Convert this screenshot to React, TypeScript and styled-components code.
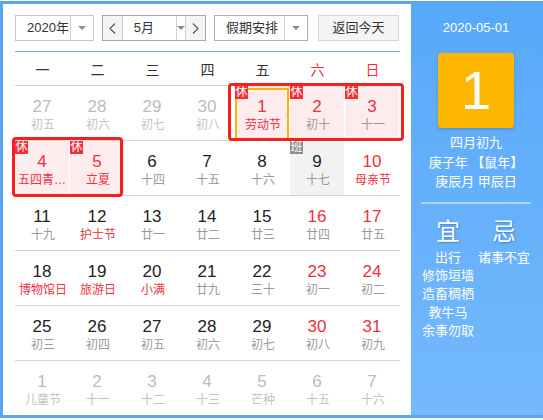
import styled, { createGlobalStyle } from "styled-components";

const GlobalStyle = createGlobalStyle`
  html, body {
    margin: 0;
    padding: 0;
    background: #fff;
    overflow: hidden;
  }
  body {
    font-family: "Liberation Sans", "Noto Sans CJK SC", sans-serif;
    color: #333;
  }
`;

type Day = {
  n: number;
  sub: string;
  other?: boolean;
  red?: boolean;
  fest?: boolean;
  mark?: "休" | "班";
  today?: boolean;
};

const weeks: Day[][] = [
  [
    { n: 27, sub: "初五", other: true },
    { n: 28, sub: "初六", other: true },
    { n: 29, sub: "初七", other: true },
    { n: 30, sub: "初八", other: true },
    { n: 1, sub: "劳动节", red: true, fest: true, mark: "休", today: true },
    { n: 2, sub: "初十", red: true, mark: "休" },
    { n: 3, sub: "十一", red: true, mark: "休" },
  ],
  [
    { n: 4, sub: "五四青年节", red: true, fest: true, mark: "休" },
    { n: 5, sub: "立夏", red: true, fest: true, mark: "休" },
    { n: 6, sub: "十四" },
    { n: 7, sub: "十五" },
    { n: 8, sub: "十六" },
    { n: 9, sub: "十七", mark: "班" },
    { n: 10, sub: "母亲节", red: true, fest: true },
  ],
  [
    { n: 11, sub: "十九" },
    { n: 12, sub: "护士节", fest: true },
    { n: 13, sub: "廿一" },
    { n: 14, sub: "廿二" },
    { n: 15, sub: "廿三" },
    { n: 16, sub: "廿四", red: true },
    { n: 17, sub: "廿五", red: true },
  ],
  [
    { n: 18, sub: "博物馆日", fest: true },
    { n: 19, sub: "旅游日", fest: true },
    { n: 20, sub: "小满", fest: true },
    { n: 21, sub: "廿九" },
    { n: 22, sub: "三十" },
    { n: 23, sub: "初一", red: true },
    { n: 24, sub: "初二", red: true },
  ],
  [
    { n: 25, sub: "初三" },
    { n: 26, sub: "初四" },
    { n: 27, sub: "初五" },
    { n: 28, sub: "初六" },
    { n: 29, sub: "初七" },
    { n: 30, sub: "初八", red: true },
    { n: 31, sub: "初九", red: true },
  ],
  [
    { n: 1, sub: "儿童节", other: true },
    { n: 2, sub: "十一", other: true },
    { n: 3, sub: "十二", other: true },
    { n: 4, sub: "十三", other: true },
    { n: 5, sub: "芒种", other: true },
    { n: 6, sub: "十五", other: true },
    { n: 7, sub: "十六", other: true },
  ],
];

const weekdays = ["一", "二", "三", "四", "五", "六", "日"];
const goodThings = ["出行", "修饰垣墙", "造畜稠栖", "教牛马", "余事勿取"];
const badThings = ["诸事不宜"];

const RED = "#f0303c";

const Widget = styled.div`
  display: flex;
  width: 560px;
  margin-top: 1px;
  border: 3px solid #5aa6f2;
  border-right: none;
  background: #fff;
`;

const Main = styled.div`
  width: 408px;
  box-sizing: border-box;
  padding: 11px 11px 0 12px;
`;

const Toolbar = styled.div`
  display: flex;
  height: 26px;
  margin-bottom: 10px;
`;

const Select = styled.div<{ $width: number; $border: string; $gap: number }>`
  display: flex;
  width: ${({ $width }) => $width}px;
  margin-right: ${({ $gap }) => $gap}px;
  box-sizing: border-box;
  border: 1px solid ${({ $border }) => $border};
  font-size: 13px;
  color: #333;
  background: #fff;
`;

const SelectLabel = styled.div<{ $width: number }>`
  width: ${({ $width }) => $width}px;
  padding-left: 11px;
  box-sizing: border-box;
  line-height: 24px;
  border-right: 1px solid #cfcfcf;
`;

const Caret = styled.div`
  flex: 1;
  display: flex;
  align-items: center;
  justify-content: center;

  &::after {
    content: "";
    border-left: 4px solid transparent;
    border-right: 4px solid transparent;
    border-top: 4px solid #8a8a8a;
  }
`;

const ArrowButton = styled.div<{ $side: "left" | "right" }>`
  width: 21px;
  display: flex;
  align-items: center;
  justify-content: center;
  background: #f4f4f4;
  ${({ $side }) =>
    $side === "left"
      ? "border-right: 1px solid #cfcfcf;"
      : "border-left: 1px solid #cfcfcf;"}
`;

const TodayButton = styled.div`
  width: 81px;
  box-sizing: border-box;
  border: 1px solid #d6d6d6;
  background: #f5f5f5;
  font-size: 13px;
  line-height: 24px;
  text-align: center;
  color: #333;
`;

const BlueLine = styled.div`
  height: 1px;
  background: #68acef;
`;

const WeekHeader = styled.div`
  display: grid;
  grid-template-columns: repeat(7, 55px);
  height: 33px;
  padding-top: 3px;
  box-sizing: border-box;
`;

const WeekName = styled.div<{ $red?: boolean }>`
  text-align: center;
  font-size: 14px;
  line-height: 30px;
  color: ${({ $red }) => ($red ? RED : "#333")};
`;

const Grid = styled.div`
  position: relative;
`;

const WeekRow = styled.div`
  display: grid;
  grid-template-columns: repeat(7, 55px);
  height: 55px;
  box-sizing: border-box;
  border-top: 1px solid #d4d4d4;
`;

const Cell = styled.div<{ $bg: string; $today?: boolean }>`
  position: relative;
  margin-right: 1px;
  padding-top: 11px;
  text-align: center;
  background: ${({ $bg }) => $bg};

  ${({ $today }) =>
    $today &&
    `&::before {
      content: "";
      position: absolute;
      top: 2px;
      left: 0;
      right: 0;
      bottom: 0;
      border: 2px solid #fcb400;
    }`}
`;

const DayNum = styled.div<{ $color: string }>`
  font-size: 17px;
  line-height: 20px;
  color: ${({ $color }) => $color};
`;

const Lunar = styled.div<{ $color: string }>`
  padding: 0 1px 0 3px;
  font-size: 12px;
  line-height: 16px;
  color: ${({ $color }) => $color};
  white-space: nowrap;
  overflow: hidden;
  text-overflow: ellipsis;
`;

const Mark = styled.span<{ $work?: boolean }>`
  position: absolute;
  top: 0;
  left: 0;
  width: 13px;
  height: 13px;
  font-size: 12px;
  line-height: 13px;
  text-align: center;
  color: #fff;
  background: ${({ $work }) => ($work ? "#8e8e8e" : "#f2303a")};
  z-index: 1;
`;

const HolidayFrame = styled.div`
  position: absolute;
  box-sizing: border-box;
  border: 3px solid #f41f1f;
  border-radius: 4px;
  pointer-events: none;
  z-index: 2;
`;

const Side = styled.div`
  width: 140px;
  box-sizing: border-box;
  padding: 16px 10px 0 0;
  background: linear-gradient(#58a8fa, #74b9fc);
  color: #fff;
  text-align: center;
`;

const DateText = styled.div`
  font-size: 13px;
  line-height: 16px;
`;

const BigDay = styled.div`
  width: 76px;
  height: 75px;
  margin: 17px auto 0;
  border-radius: 3px;
  background: #fdb702;
  box-shadow: 0 1px 3px rgba(0, 0, 0, 0.18);
  font-size: 54px;
  line-height: 75px;
`;

const LunarInfo = styled.div`
  margin-top: 5px;
  font-size: 13px;
  line-height: 19.5px;
`;

const Divider = styled.div`
  width: 110px;
  height: 2px;
  margin: 10px auto 0;
  background: rgba(255, 255, 255, 0.45);
`;

const Almanac = styled.div`
  display: grid;
  grid-template-columns: 56px 56px;
  justify-content: center;
  margin-top: 13px;
`;

const AlmanacHead = styled.div`
  font-size: 24px;
  line-height: 30px;
  text-shadow: 1px 1px 2px rgba(0, 40, 100, 0.35);
`;

const AlmanacList = styled.div`
  margin-top: 2px;
  font-size: 13px;
  line-height: 18.4px;
`;

const Chevron = ({ dir }: { dir: "left" | "right" }) => (
  <svg width="7" height="11" viewBox="0 0 7 11">
    <polyline
      points={dir === "left" ? "6,0.5 1,5.5 6,10.5" : "1,0.5 6,5.5 1,10.5"}
      fill="none"
      stroke="#555"
      strokeWidth="1.1"
    />
  </svg>
);

const cellBg = (d: Day) => {
  if (d.mark === "休") return "#fdeced";
  if (d.mark === "班") return "#f2f2f2";
  return "transparent";
};

const numColor = (d: Day) => {
  if (d.other) return "#bcbcbc";
  return d.red ? RED : "#222";
};

const lunarColor = (d: Day) => {
  if (d.other) return "#c2c2c2";
  return d.fest ? RED : "#9a9a9a";
};

export default function App() {
  return (
    <>
      <GlobalStyle />
      <Widget>
        <Main>
          <Toolbar>
            <Select $width={79} $border="#c6c6c6" $gap={8}>
              <SelectLabel $width={55}>2020年</SelectLabel>
              <Caret />
            </Select>
            <Select $width={104} $border="#a9a9a9" $gap={8}>
              <ArrowButton $side="left">
                <Chevron dir="left" />
              </ArrowButton>
              <SelectLabel $width={60}>5月</SelectLabel>
              <Caret />
              <ArrowButton $side="right">
                <Chevron dir="right" />
              </ArrowButton>
            </Select>
            <Select $width={94} $border="#b0b0b0" $gap={10}>
              <SelectLabel $width={70}>假期安排</SelectLabel>
              <Caret />
            </Select>
            <TodayButton>返回今天</TodayButton>
          </Toolbar>
          <BlueLine />
          <WeekHeader>
            {weekdays.map((w, i) => (
              <WeekName key={w} $red={i >= 5}>
                {w}
              </WeekName>
            ))}
          </WeekHeader>
          <Grid>
            {weeks.map((week, wi) => (
              <WeekRow key={wi}>
                {week.map((d, di) => (
                  <Cell key={di} $bg={cellBg(d)} $today={d.today}>
                    {d.mark && <Mark $work={d.mark === "班"}>{d.mark}</Mark>}
                    <DayNum $color={numColor(d)}>{d.n}</DayNum>
                    <Lunar $color={lunarColor(d)}>{d.sub}</Lunar>
                  </Cell>
                ))}
              </WeekRow>
            ))}
            <HolidayFrame
              style={{ left: 213, top: -2, width: 176, height: 58 }}
            />
            <HolidayFrame
              style={{ left: -3, top: 52, width: 111, height: 60 }}
            />
          </Grid>
        </Main>
        <Side>
          <DateText>2020-05-01</DateText>
          <BigDay>1</BigDay>
          <LunarInfo>
            <div>四月初九</div>
            <div>庚子年 【鼠年】</div>
            <div>庚辰月 甲辰日</div>
          </LunarInfo>
          <Divider />
          <Almanac>
            <AlmanacHead>宜</AlmanacHead>
            <AlmanacHead>忌</AlmanacHead>
            <AlmanacList>
              {goodThings.map((t) => (
                <div key={t}>{t}</div>
              ))}
            </AlmanacList>
            <AlmanacList>
              {badThings.map((t) => (
                <div key={t}>{t}</div>
              ))}
            </AlmanacList>
          </Almanac>
        </Side>
      </Widget>
    </>
  );
}
